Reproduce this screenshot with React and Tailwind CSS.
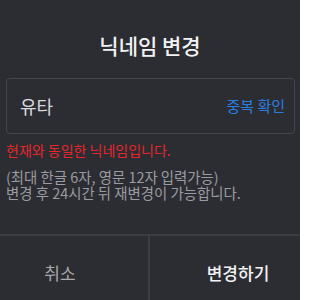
export default function App() {
  const font = { fontFamily: '"Noto Sans CJK KR", "Noto Sans", sans-serif' };
  return (
    <div className="w-[300px] h-[300px] overflow-hidden bg-[#2c2d32] flex flex-col" style={font}>
      <div className="pt-[31px] h-[59px] text-center text-[21px] leading-[28px] font-medium text-[#f2f2f4]">
        닉네임 변경
      </div>
      <div className="mt-[19px] ml-[6px] mr-[5px] h-[56px] shrink-0 border border-[#45464d] rounded-[4px] flex items-center justify-between pl-[13px] pr-[9px]">
        <span className="text-[18px] text-[#d8d8dc]">유타</span>
        <span className="text-[15px] text-[#2b7de0]">중복 확인</span>
      </div>
      <div className="mt-[6px] pl-[6px] text-[14px] leading-[20px] text-[#e5262c]">
        현재와 동일한 닉네임입니다.
      </div>
      <div className="mt-[9px] pl-[6px] text-[14.4px] leading-[15.5px] text-[#9b9ca2]">
        <div>(최대 한글 6자, 영문 12자 입력가능)</div>
        <div>변경 후 24시간 뒤 재변경이 가능합니다.</div>
      </div>
      <div className="mt-[34px] h-[2px] bg-[#3c3d43] shrink-0" />
      <div className="flex h-[70px] shrink-0">
        <div className="w-[148px] flex items-center justify-center pr-[28px] pt-[3px] text-[17px] text-[#a8a9ae]">취소</div>
        <div className="w-[2px] bg-[#3c3d43]" />
        <div className="flex-1 flex items-center justify-center pl-[26px] pt-[3px] text-[17px] font-medium text-[#f2f2f4]">변경하기</div>
      </div>
    </div>
  );
}
